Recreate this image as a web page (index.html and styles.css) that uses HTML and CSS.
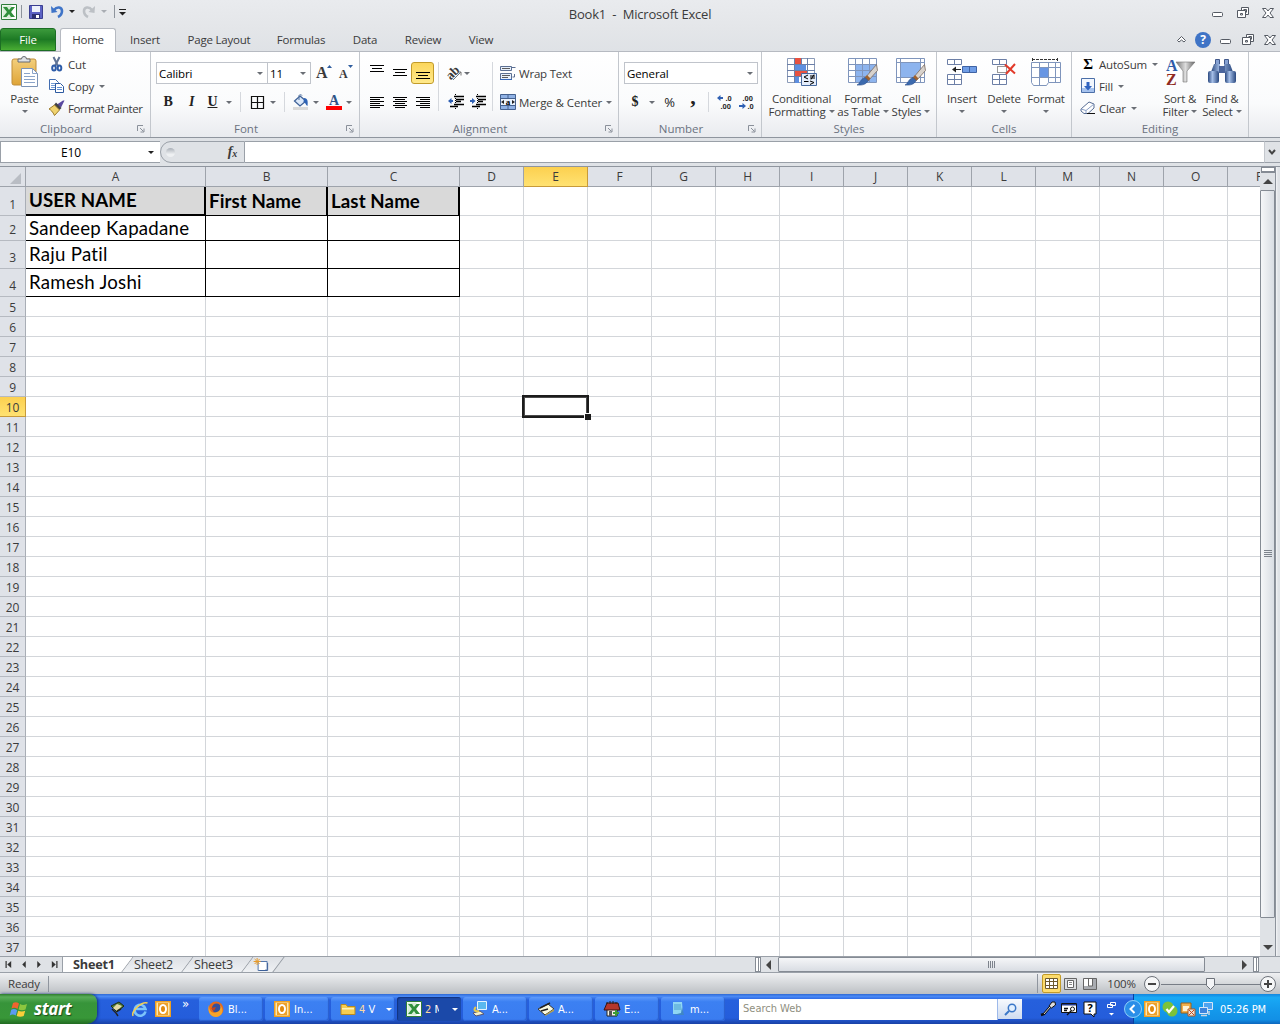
FILE: index.html
```html
<!DOCTYPE html>
<html lang="en">
<head>
<meta charset="UTF-8">
<meta name="viewport" content="width=device-width, initial-scale=1.0">
<title>Book1 - Microsoft Excel</title>
<link rel="stylesheet" href="styles.css">
</head>
<body>
  <svg class="sprite">
    <defs>
      <linearGradient id="darkBlue" x1="0" y1="0" x2="1" y2="0"><stop offset="0" stop-color="#29487f"/><stop offset=".4" stop-color="#a5bfe8"/><stop offset="1" stop-color="#29487f"/></linearGradient>
      <linearGradient id="grey" x1="0" y1="0" x2="1" y2="0"><stop offset="0" stop-color="#777"/><stop offset=".5" stop-color="#ddd"/><stop offset="1" stop-color="#666"/></linearGradient>
      <linearGradient id="board" x1="0" y1="0" x2="0" y2="1"><stop offset="0" stop-color="#f3cf7c"/><stop offset="1" stop-color="#dfa437"/></linearGradient>
    </defs>
    <symbol id="minimize" viewBox="0 0 12 12"><rect x=".5" y="5.5" width="10" height="4" rx="1" fill="#fff" stroke="#555a63"/></symbol>
    <symbol id="restore" viewBox="0 0 12 12"><path d="M4.500.5h7v7h-7z" fill="#fff" stroke="#555a63"/><path d="M.5 3.500h8v7h-8z" fill="#fff" stroke="#555a63"/><path d="M3.500 6.500h2v1.500h-2zM6.500 2.500h3v3" fill="none" stroke="#555a63"/></symbol>
    <symbol id="close" viewBox="0 0 12 12"><path d="M.5 1.500h3.500L6 4l2-2.500h3.500L8 6l3.500 4.500H8L6 8l-2 2.500H.5L4 6z" fill="#fff" stroke="#555a63"/></symbol>
    <symbol id="launcher" viewBox="0 0 8 8"><path d="M.5 6V.5H6M3 3l3.500 3.500M7 3.500V7H3.500" fill="none" stroke="#8a909a"/></symbol>
    <symbol id="brush" viewBox="0 0 22 22"><path d="M20.500 0.500l1 6-9 10-3-3z" fill="#d8d2cc" stroke="#7a6a60" stroke-width=".8"/><path d="M11 11l3.500 3.500-2.500 2.500-3.500-3z" fill="#a0622d"/><path d="M9 13.500l3 3c-1.500 4-6 5-11 4.500 3-1 3-6 8-7.500z" fill="#3b69ad" stroke="#2b4f8b" stroke-width=".6"/></symbol>
    <symbol id="outlook" viewBox="0 0 16 16"><path d="M0 0h16v16H0z" fill="#f0a020"/><path d="M1.500 1.500h13v13h-13z" fill="#fbe6b0"/><path d="M3 2h10v12H3z" fill="#eda02a"/><ellipse cx="8" cy="8" rx="3" ry="4" fill="#e08a10" stroke="#fff" stroke-width="2"/></symbol>
    <symbol id="excel" viewBox="0 0 16 16"><path d="M.5.5h15v15H.5z" fill="#fff" stroke="#2e7d3a"/><path d="M1.500 1.500h9v13h-9z" fill="#d8edd8"/><path d="M2 3h4l2 3 2.500-3H14L10 8l4 5h-4l-2-3-2.500 3H2l4-5z" fill="#30903c"/></symbol>
  </svg>

  <div class="title-bar">
    <div class="quick-access">
      <svg class="qa-excel" viewBox="0 0 16 16"><use href="#excel"/></svg>
      <i class="qa-sep"></i>
      <svg class="qa-save" viewBox="0 0 14 14"><path d="M.5.5h13v13h-13z" fill="#5c62c4" stroke="#3b3f91"/><path d="M3 1h8v6H3z" fill="#eef2fb"/><path d="M3 9h8v5H3z" fill="#2d3173"/><path d="M7 10h3v3H7z" fill="#fff"/></svg>
      <svg class="qa-undo" viewBox="0 0 13 13"><path d="M3 5c3-4 8-3 8 1 0 3-2 5-4 6" fill="none" stroke="#3f74c8" stroke-width="2.600"/><path d="M0 1l.5 7 6-1z" fill="#3f74c8"/></svg>
      <i class="caret black"></i>
      <svg class="qa-redo" viewBox="0 0 13 13"><path d="M10 5C7 1 2 2 2 6c0 3 2 5 4 6" fill="none" stroke="#bcc0c5" stroke-width="2.600"/><path d="M13 1l-.5 7-6-1z" fill="#bcc0c5"/></svg>
      <i class="caret light"></i>
      <i class="qa-sep last"></i>
      <svg class="qa-more" viewBox="0 0 7 7"><path d="M0 .5h7" stroke="#222"/><path d="M0 3h7L3.500 6.500z" fill="#222"/></svg>
    </div>
    <h1>Book1&nbsp; -&nbsp; Microsoft Excel</h1>
    <div class="window-buttons">
      <svg><use href="#minimize"/></svg>
      <svg><use href="#restore"/></svg>
      <svg><use href="#close"/></svg>
    </div>
  </div>

  <div class="tabs">
    <span class="tab file">File</span>
    <span class="tab home">Home</span>
    <span class="tab insert">Insert</span>
    <span class="tab layout">Page Layout</span>
    <span class="tab formulas">Formulas</span>
    <span class="tab data">Data</span>
    <span class="tab review">Review</span>
    <span class="tab view">View</span>
    <div class="tab-buttons">
      <svg class="collapse" viewBox="0 0 9 7"><path d="M.5 4.500l4-4 4 4-1.500 1.500-2.500-2-2.500 2z" fill="#fff" stroke="#555a63"/></svg>
      <span class="help">?</span>
      <svg><use href="#minimize"/></svg>
      <svg><use href="#restore"/></svg>
      <svg><use href="#close"/></svg>
    </div>
  </div>

  <div class="ribbon">
    <div class="group clipboard">
      <div class="group-body">
        <div class="big paste">
          <svg viewBox="0 0 28 32"><rect x="1" y="3" width="24" height="26" rx="2" fill="url(#board)" stroke="#c08e3a"/><path d="M7 6V3h3.500a2.500 2.500 0 0 1 5 0H19v3z" fill="#dfe2e6" stroke="#666b73"/><path d="M10.500 12.500h11l5 5v13h-16z" fill="#fff" stroke="#7c93b5"/><path d="M21.500 12.500v5h5M13 17.500h6M13 20.500h11M13 23.500h11M13 26.500h11" fill="none" stroke="#8ba4c9"/></svg>
          <span>Paste</span><i class="caret"></i>
        </div>
        <div class="small-list">
          <div class="small"><svg viewBox="0 0 16 16"><path d="M4.500 1l4.500 9M10.500 1L6 10" stroke="#5f7396" stroke-width="2"/><ellipse cx="5" cy="12" rx="1.800" ry="2.500" fill="none" stroke="#2e5ca8" stroke-width="2"/><ellipse cx="10.500" cy="12" rx="1.800" ry="2.500" fill="none" stroke="#2e5ca8" stroke-width="2"/></svg><span>Cut</span></div>
          <div class="small"><svg viewBox="0 0 16 16"><path d="M.5 1.500h6l3 3v7h-9z" fill="#fff" stroke="#426db1"/><path d="M2 5.500h5M2 7.500h5M2 9.500h4" stroke="#739cd6"/><path d="M6.500 5.500h5l3 3v6h-8z" fill="#fff" stroke="#2d5aa0"/><path d="M8 9.500h5M8 11.500h5" stroke="#5f8ed2"/></svg><span>Copy</span><i class="caret"></i></div>
          <div class="small"><svg viewBox="0 0 16 16"><path d="M15.500.5l-3.500 7-4-3 6-4z" fill="#5948a0"/><path d="M7 2.500l5.500 5.500-2 2-5.500-5z" fill="#3f4047"/><path d="M5.500 5l5 5-5 5.500C4 12 1.500 9.500 0 9z" fill="#f0d36f" stroke="#9c7b2a"/></svg><span class="painter">Format Painter</span></div>
        </div>
      </div>
      <div class="group-label"><span>Clipboard</span><svg><use href="#launcher"/></svg></div>
    </div>

    <div class="group font">
      <div class="group-body rows">
        <div class="row">
          <div class="combo family"><span>Calibri</span><i class="caret"></i></div>
          <div class="combo size"><span>11</span><i class="caret"></i></div>
          <span class="grow-font">A<svg viewBox="0 0 5 3"><path d="M0 3h5L2.500 0z" fill="#2f5d9e"/></svg></span>
          <span class="grow-font shrink">A<svg viewBox="0 0 5 3"><path d="M0 0h5L2.500 3z" fill="#2f5d9e"/></svg></span>
        </div>
        <div class="row">
          <b class="letter w24">B</b>
          <i class="letter w23">I</i>
          <u class="letter w19">U</u>
          <span class="drop w14"><i class="caret"></i></span>
          <i class="sep font-sep"></i>
          <span class="cell-icon w19"><svg class="s13" viewBox="0 0 13 13"><path d="M.5.5h12v12H.5zM6.500 0v13M0 6.500h13" fill="none" stroke="#111" stroke-width="1.200"/></svg></span>
          <span class="drop w12"><i class="caret"></i></span>
          <i class="sep font-sep2"></i>
          <span class="cell-icon w20"><svg class="s16" viewBox="0 0 16 16"><path d="M7 2l6 5-6 5-5.500-5z" fill="#dce9fa" stroke="#3f6298" stroke-width="1.300"/><path d="M6 6V1.500c0-1 3-1 3 0" fill="none" stroke="#51719f"/><path d="M11 4c4 0 4 4 3.500 8-2-1-2-4-4-4z" fill="#2e63b5"/><path d="M0 13h15v3H0z" fill="#d9d9d9"/></svg></span>
          <span class="drop w10"><i class="caret"></i></span>
          <span class="font-color">A</span>
          <span class="drop w8"><i class="caret"></i></span>
        </div>
      </div>
      <div class="group-label"><span>Font</span><svg><use href="#launcher"/></svg></div>
    </div>

    <div class="group alignment">
      <div class="group-body">
        <div class="rows icons">
          <div class="row">
            <span class="align-btn"><svg class="lines" viewBox="0 0 14 13"><path d="M0 .5h14M2 3.500h10M0 6.500h14" stroke="#000"/></svg></span>
            <span class="align-btn"><svg class="lines" viewBox="0 0 14 13"><path d="M0 4.500h14M2 7.500h10M0 10.500h14" stroke="#000"/></svg></span>
            <span class="align-btn active"><svg class="lines" viewBox="0 0 14 13"><path d="M0 7.500h14M2 10.500h10M0 13.500h14" stroke="#000"/></svg></span>
          </div>
          <div class="row">
            <span class="align-btn"><svg class="lines" viewBox="0 0 14 13"><path d="M0 1.500h14M0 3.500h10M0 5.500h14M0 7.500h10M0 9.500h14M0 11.500h10" stroke="#000"/></svg></span>
            <span class="align-btn"><svg class="lines" viewBox="0 0 14 13"><path d="M0 1.500h14M2 3.500h10M0 5.500h14M2 7.500h10M0 9.500h14M2 11.500h10" stroke="#000"/></svg></span>
            <span class="align-btn"><svg class="lines" viewBox="0 0 14 13"><path d="M0 1.500h14M4 3.500h10M0 5.500h14M4 7.500h10M0 9.500h14M4 11.500h10" stroke="#000"/></svg></span>
          </div>
        </div>
        <i class="sep tall"></i>
        <div class="rows indent">
          <div class="row">
            <span class="orient"><b>ab</b><svg viewBox="0 0 9 9"><path d="M0 9l8-8M4.500 1H8v3.500" fill="none" stroke="#777"/></svg></span>
            <i class="caret"></i>
          </div>
          <div class="row">
            <span class="cell-icon w23"><svg class="s16" viewBox="0 0 16 16"><path d="M6 2.500h10M8 5.500h8M8 7.500h5M6 10.500h10M2 12.500h8" stroke="#000" stroke-width="1.400"/><path d="M7.500 0v16" stroke="#000" stroke-dasharray="1 1"/><path d="M5 7H2" stroke="#2f60b3" stroke-width="2"/><path d="M0 7l3.500-3v6z" fill="#2f60b3"/></svg></span>
            <span class="cell-icon w22"><svg class="s16" viewBox="0 0 16 16"><path d="M6 2.500h10M8 5.500h8M8 7.500h5M6 10.500h10M2 12.500h8" stroke="#000" stroke-width="1.400"/><path d="M7.500 0v16" stroke="#000" stroke-dasharray="1 1"/><path d="M0 7h3" stroke="#2f60b3" stroke-width="2"/><path d="M5.500 7L2 4v6z" fill="#2f60b3"/></svg></span>
          </div>
        </div>
        <i class="sep tall"></i>
        <div class="rows wrap">
          <div class="row">
            <svg class="s16" viewBox="0 0 16 16"><path d="M.5 1.500h11v4H.5zM.5 8.500h11v6H.5z" fill="#e6effb" stroke="#5b6f92"/><path d="M2 3.500h8M2 10.500h8M2 12.500h6" stroke="#5b5b5b"/><path d="M12 2.500h3.500M14.500 9v3h-2" fill="none" stroke="#5b6f92"/><path d="M0 14.500h12" stroke="#3567b8"/></svg>
            <span class="label">Wrap Text</span>
          </div>
          <div class="row">
            <svg class="s16" viewBox="0 0 16 16"><path d="M.5.5h15v15H.5z" fill="#8fb1e4" stroke="#44618f"/><path d="M1 4.500h14M1 11.500h14M8 1v3M8 12v3" stroke="#44618f"/><path d="M1 5h14v6H1z" fill="#eaf2fd"/><path d="M1 8l3-2v4zM15 8l-3-2v4z" fill="#222"/><text x="8" y="11" class="merge-a">a</text></svg>
            <span class="label merge">Merge &amp; Center</span><i class="caret"></i>
          </div>
        </div>
      </div>
      <div class="group-label"><span>Alignment</span><svg><use href="#launcher"/></svg></div>
    </div>

    <div class="group number">
      <div class="group-body rows">
        <div class="row"><div class="combo format"><span>General</span><i class="caret"></i></div></div>
        <div class="row">
          <b class="letter w22">$</b>
          <span class="drop w11"><i class="caret"></i></span>
          <span class="percent">%</span>
          <b class="comma">,</b>
          <i class="sep number-sep"></i>
          <svg class="decimal" viewBox="0 0 16 16"><path d="M6 4H2" stroke="#2f60b3" stroke-width="2"/><path d="M0 4l3.500-3v6z" fill="#2f60b3"/><text x="8.500" y="6.500">.0</text><text x="3.500" y="15">.00</text></svg>
          <svg class="decimal" viewBox="0 0 16 16"><path d="M0 12h4" stroke="#2f60b3" stroke-width="2"/><path d="M7 12L3.500 9v6z" fill="#2f60b3"/><text x="3.500" y="6.500">.00</text><text x="8.500" y="15">.0</text></svg>
        </div>
      </div>
      <div class="group-label"><span>Number</span><svg><use href="#launcher"/></svg></div>
    </div>

    <div class="group styles">
      <div class="group-body">
        <div class="big cond">
          <svg viewBox="0 0 32 32"><path d="M1.500 2.500h27v24h-27z" fill="#fff" stroke="#8b9bb8"/><path d="M8 2h7v6H8z" fill="#e8513f"/><path d="M8 8h12v6H8z" fill="#5e8fe0"/><path d="M8 14h13v6H8z" fill="#e8513f"/><path d="M8 20h5v7H8z" fill="#5e8fe0"/><path d="M1 8.500h28M1 14.500h28M1 20.500h28M8.500 2v25M15.500 2v6M21.500 2v25" fill="none" stroke="#6b7fa8"/><path d="M15.500 17.500h15v12h-15z" fill="#e3ecfa" stroke="#47699e"/><path d="M22 19l-4 2 4 2M18 25.500h4.500M24 20h5M24 22h5M28 18.500l-3 5M24 25l4 1.500-4 2" fill="none" stroke="#000"/></svg>
          <span>Conditional</span><span>Formatting<i class="caret"></i></span>
        </div>
        <div class="big astable">
          <svg viewBox="0 0 32 32"><path d="M1.500 2.500h28v24h-28z" fill="#fff" stroke="#7f95bc"/><path d="M9 8h20v18H9z" fill="#8db4ee"/><path d="M1 8.500h28M1 14.500h28M1 20.500h28M8.500 2v25M15.500 2v25M22.500 2v25" fill="none" stroke="#7f95bc"/><use href="#brush" x="9" y="8" width="22" height="22"/></svg>
          <span>Format</span><span>as Table<i class="caret"></i></span>
        </div>
        <div class="big cellstyle">
          <svg viewBox="0 0 32 32"><path d="M1.500 2.500h28v24h-28z" fill="#fff" stroke="#7f95bc"/><path d="M1 6.500h28M1 21.500h28M5.500 2v25M25.500 2v25" stroke="#7f95bc"/><path d="M6 7h19v14H6z" fill="#8db4ee"/><use href="#brush" x="9" y="8" width="22" height="22"/></svg>
          <span>Cell</span><span>Styles<i class="caret"></i></span>
        </div>
      </div>
      <div class="group-label plain"><span>Styles</span></div>
    </div>

    <div class="group cells">
      <div class="group-body">
        <div class="big">
          <svg viewBox="0 0 32 32"><path d="M1.500 3.500h14v5h-14zM8.500 3.500v5M1.500 18.500h14v10h-14zM8.500 18.500v10M1.500 23.500h14" fill="#fff" stroke="#6c7fa6"/><path d="M16.500 10.500h14v6h-14z" fill="#6f9de6" stroke="#3f63a4"/><path d="M23.500 10v7" stroke="#3f63a4"/><path d="M8 13.500h7" stroke="#222"/><path d="M6 13.500l4-3v6z" fill="#222"/></svg>
          <span>Insert</span><i class="caret"></i>
        </div>
        <div class="big">
          <svg viewBox="0 0 32 32"><path d="M4.500 3.500h14v5h-14zM11.500 3.500v5M4.500 18.500h14v10h-14zM11.500 18.500v10M4.500 23.500h14" fill="#fff" stroke="#6c7fa6"/><path d="M9.500 10.500h9v6h-9z" fill="#fff" stroke="#333" stroke-dasharray="1 1"/><path d="M17 8.500l10 9M27 8l-9 10" stroke="#e23b2b" stroke-width="2"/></svg>
          <span>Delete</span><i class="caret"></i>
        </div>
        <div class="big">
          <svg viewBox="0 0 32 32"><path d="M2 3.500h26M2.500 2v3M27.500 2v3" stroke="#333" stroke-dasharray="3 1"/><path d="M1.500 6.500h29v20h-12l-2 3h-13l-2-3z" fill="#fff" stroke="#7f95bc"/><path d="M1 11.500h29M1 21.500h29M9.500 6v23M18.500 6v20M25.500 6v20" stroke="#7f95bc"/><path d="M10 12h8v9h-8z" fill="#6896e4"/></svg>
          <span>Format</span><i class="caret"></i>
        </div>
      </div>
      <div class="group-label plain"><span>Cells</span></div>
    </div>

    <div class="group editing">
      <div class="group-body">
        <div class="small-list">
          <div class="small"><b class="sigma">Σ</b><span>AutoSum</span><i class="caret"></i></div>
          <div class="small"><svg viewBox="0 0 16 16"><path d="M1.500.5h13v14h-13z" fill="#f2f7fe" stroke="#4b6fa8"/><path d="M2 10h12v4H2z" fill="#a7c3ee"/><path d="M6.500 4h3v4H12l-4 4.500L4 8h2.500z" fill="#2f63c0"/></svg><span>Fill</span><i class="caret"></i></div>
          <div class="small"><svg viewBox="0 0 16 16"><path d="M9 2l5 2v4l-6 5.500H4L1 11v-2z" fill="#fff" stroke="#576d94"/><path d="M1 9l5 1.500L14 4M6 10.500V13" fill="none" stroke="#8ba0c6"/><path d="M7 13.500h8" stroke="#111"/></svg><span>Clear</span><i class="caret"></i></div>
        </div>
        <div class="big">
          <svg viewBox="0 0 32 32"><path d="M12 6h19l-8 9v11h-4V15z" fill="url(#grey)" stroke="#777" stroke-width=".6"/><text x="2" y="15" class="az-a">A</text><text x="2" y="29" class="az-z">Z</text></svg>
          <span>Sort &amp;</span><span>Filter<i class="caret"></i></span>
        </div>
        <div class="big find">
          <svg viewBox="0 0 32 32"><path d="M9.500 3.500h4v5h-4zM18.500 3.500h4v5h-4z" fill="#86a2d3" stroke="#40588a"/><path d="M8 8h6v8H5zM18 8h6l3 8h-9z" fill="url(#darkBlue)"/><path d="M13 10h6v7h-6z" fill="#4a659c"/><rect x="2" y="15" width="11" height="12" rx="2" fill="url(#darkBlue)"/><rect x="19" y="15" width="11" height="12" rx="2" fill="url(#darkBlue)"/></svg>
          <span>Find &amp;</span><span>Select<i class="caret"></i></span>
        </div>
      </div>
      <div class="group-label plain"><span>Editing</span></div>
    </div>
  </div>

  <div class="formula-bar">
    <div class="name-box"><span>E10</span><i class="caret black"></i></div>
    <div class="fx-area"><i class="knob"></i><span class="fx">f<sub>x</sub></span></div>
    <div class="formula-input"></div>
    <div class="expand"><svg viewBox="0 0 8 7"><path d="M1 1l3 3.500L7 1" fill="none" stroke="#444" stroke-width="2"/></svg></div>
  </div>

  <div class="workspace">
    <div class="sheet">
      <table>
        <colgroup id="cols"></colgroup>
        <thead><tr id="colHeads"></tr></thead>
        <tbody id="rows"></tbody>
      </table>
    </div>
    <div class="v-scroll">
      <i class="split"></i>
      <i class="arrow up"></i>
      <div class="thumb"><i class="grip"></i></div>
      <i class="arrow down"></i>
    </div>
  </div>

  <div class="sheet-bar">
    <div class="sheet-nav">
      <svg viewBox="0 0 8 8"><path d="M.7 0v8" stroke="#333" stroke-width="1.400"/><path d="M6.500 0v8L2 4z" fill="#333"/></svg>
      <svg viewBox="0 0 8 8"><path d="M6 0v8L2 4z" fill="#333"/></svg>
      <svg viewBox="0 0 8 8"><path d="M2 0v8l4-4z" fill="#333"/></svg>
      <svg viewBox="0 0 8 8"><path d="M7.300 0v8" stroke="#333" stroke-width="1.400"/><path d="M1.500 0v8L6 4z" fill="#333"/></svg>
    </div>
    <div class="sheet-tab current"><span>Sheet1</span></div>
    <div class="sheet-tab"><span>Sheet2</span></div>
    <div class="sheet-tab"><span>Sheet3</span></div>
    <div class="sheet-tab new"><svg viewBox="0 0 16 14"><path d="M4.500 3.500h9v7l-2 2h-7z" fill="#fff" stroke="#5476ab"/><path d="M6 12.500h8V5" fill="none" stroke="#3c5f98"/><path d="M3.500 0v7M0 3.500h7M1 1l5 5M6 1L1 6" stroke="#e69a2b"/></svg></div>
    <div class="h-scroll">
      <i class="split"></i>
      <i class="arrow left"></i>
      <div class="thumb"><i class="grip"></i></div>
      <i class="arrow right"></i>
      <i class="split end"></i>
    </div>
  </div>

  <div class="status-bar">
    <span class="ready">Ready</span>
    <div class="status-right">
      <span class="view-btn active"><svg viewBox="0 0 13 11"><path d="M.5.5h12v10H.5zM0 3.500h13M0 7.500h13M4.500 0v11M8.500 0v11" fill="#fff" stroke="#6d5a2e"/></svg></span>
      <svg class="view-icon" viewBox="0 0 14 12"><path d="M.5.5h12v11H.5z" fill="#dcdee1" stroke="#666"/><path d="M3.500 2.500h6v7h-6z" fill="#fff" stroke="#666"/><path d="M5 4.500h3M5 6.500h3" stroke="#888"/></svg>
      <svg class="view-icon" viewBox="0 0 14 12"><path d="M.5.5h13v11H.5z" fill="#a9acb1" stroke="#666"/><path d="M1 1h4v7H1zM6 1h3v7H6z" fill="#fff"/><path d="M5.500 1v7h4V1" fill="none" stroke="#666"/></svg>
      <span class="zoom">100%</span>
      <svg class="slider" viewBox="0 0 136 18"><path d="M17 9.500h101" stroke="#777d86"/><circle cx="8" cy="9" r="7.500" fill="#f6f7f8" stroke="#6c7179"/><path d="M4 9h8" stroke="#444" stroke-width="2"/><path d="M62.500 3.500h8v7l-4 4-4-4z" fill="#f4f5f7" stroke="#6c7179"/><circle cx="124" cy="9" r="7.500" fill="#f6f7f8" stroke="#6c7179"/><path d="M120 9h8M124 5v8" stroke="#444" stroke-width="2"/></svg>
    </div>
  </div>

  <div class="taskbar">
    <div class="start">
      <svg viewBox="0 0 18 17"><path d="M3 2c2-1 4-1 6 .5L7.500 8C5.500 6.500 3.500 6.500 1.500 7.500z" fill="#f0642f"/><path d="M10 3c2 1.200 4 1.200 7 0l-1.500 5.500c-2 1-5 1-7 0z" fill="#8cc63f"/><path d="M1.200 8.700c2-1 4-.8 6 .5L5.700 14.500c-2-1.200-4-1.200-6 0z" fill="#5b9bf0"/><path d="M8.200 9.700c2 1 5 1 7 0L13.700 15c-2 1-5 1-7 0z" fill="#fbce3a"/></svg>
      <span>start</span>
    </div>
    <div class="quick-launch">
      <svg viewBox="0 0 16 16"><path d="M2 5l8-4 5 4-7 6z" fill="#4f7b3b" stroke="#1e2b14"/><path d="M4 7l4-4 5 2-5 5z" fill="#e3d9a6"/><path d="M3 8l4 4 2 3M8 10l4-2" fill="none" stroke="#222" stroke-width="1.400"/></svg>
      <svg viewBox="0 0 16 16"><path d="M13.500 10.500A5.500 5.500 0 1 1 13.500 8H4" fill="none" stroke="#7cc4fb" stroke-width="2.600"/><path d="M1 15C-1 10 10 0 15.500 2" fill="none" stroke="#f3cf55" stroke-width="1.500"/></svg>
      <svg viewBox="0 0 16 16"><use href="#outlook"/></svg>
      <span>»</span>
    </div>
    <div class="tasks">
      <div class="task"><svg viewBox="0 0 16 16"><circle cx="8" cy="8" r="7.500" fill="#e66a1c"/><circle cx="8.500" cy="7" r="4.500" fill="#34509e"/><path d="M1 4c0 7 4 9 8 7 3-1 4-4 3-7 5 5 2 12-4 12C2 16-1 10 1 4z" fill="#f6a42a"/><path d="M3 7l5-1-2 4z" fill="#c8431b"/></svg><span>Bl...</span></div>
      <div class="task"><svg viewBox="0 0 16 16"><use href="#outlook"/></svg><span>In...</span></div>
      <div class="task multi"><svg viewBox="0 0 16 16"><path d="M1 3.500h5l1.500 2H15v8H1z" fill="#f6ce52" stroke="#b98a1f"/><path d="M2 7h12v1.500H2z" fill="#fff3b8"/></svg><span><em>4</em> V</span><i class="caret white"></i></div>
      <div class="task multi pressed"><svg viewBox="0 0 16 16"><use href="#excel"/></svg><span><em>2</em> <s>M</s></span><i class="caret white"></i></div>
      <div class="task"><svg viewBox="0 0 16 16"><path d="M5.500.5h9v8h-9z" fill="#5bb8ef" stroke="#e4f2ff"/><path d="M1 12l7-2 4 3-8 2z" fill="#f4f0ca" stroke="#557"/><path d="M4 6c-3 3-1 5 3 4" fill="none" stroke="#e7c84c" stroke-width="2"/></svg><span>A...</span></div>
      <div class="task"><svg viewBox="0 0 16 16"><path d="M0 8l10-5 6 5-9 6z" fill="#fbfae0" stroke="#333"/><path d="M2 7L12 2M3 10l7-2" stroke="#222" stroke-width="1.400"/><path d="M7 14l9-6v2l-9 5z" fill="#b7a24e"/></svg><span>A...</span></div>
      <div class="task"><svg viewBox="0 0 16 16"><path d="M3 7h10v8H3z" fill="#f3f3ea" stroke="#222"/><path d="M0 9l3-7h11l2 7z" fill="#b5372c" stroke="#3b1210"/><path d="M3 1v2M6 0v3M9 0v3M12 1v2" stroke="#222"/><path d="M5 10h3v5H5z" fill="#555"/><path d="M9 12h6M12 9v6" stroke="#3d9b36" stroke-width="2"/></svg><span>E...</span></div>
      <div class="task"><svg viewBox="0 0 16 16"><path d="M3 1h9l1 12H3z" fill="#8fd6f3"/><path d="M4 4h7M4 6h7M4 8h7" stroke="#4aa0cf"/><path d="M12 6l2 8H3l8-2z" fill="#3f86c4"/></svg><span>m...</span></div>
    </div>
    <div class="search"><span>Search Web</span></div>
    <div class="search-btn"><svg viewBox="0 0 13 13"><circle cx="8" cy="5" r="3.700" fill="#e2f0ff" stroke="#3a77c8" stroke-width="1.500"/><path d="M5 8l-4 4" stroke="#3a77c8" stroke-width="2"/></svg></div>
    <div class="lang-bar">
      <svg class="mic" viewBox="0 0 16 16"><path d="M9 5l3-4h3l.5 3-4 3z" fill="#ddd" stroke="#111"/><path d="M10 6l-6 7-3 1" fill="none" stroke="#111" stroke-width="2.500"/><path d="M10 6l-6 7" stroke="#ddd"/></svg>
      <svg class="pad" viewBox="0 0 16 16"><path d="M.5 2.500h15v9H.5z" fill="#fff" stroke="#111"/><path d="M1 3h14v1.500H1z" fill="#223a8c"/><path d="M3 7.500h4M3 9.500h3M6 14l6-6" stroke="#111" stroke-width="1.400"/><circle cx="11.500" cy="8" r="2" fill="#fff" stroke="#111"/></svg>
      <svg class="hlp" viewBox="0 0 14 16"><path d="M1 1h12v12h-2v3l-3-3H1z" fill="#fff" stroke="#111"/><text x="7" y="11">?</text></svg>
      <svg class="opt" viewBox="0 0 9 16"><path d="M3.500 1.500h5v3h-5zM.5 3.500h5v3h-5z" fill="#2456c9" stroke="#fff"/><path d="M2 12h5l-2.500 2.500z" fill="#fff"/></svg>
    </div>
    <div class="tray">
      <svg class="chevron" viewBox="0 0 18 18"><circle cx="9" cy="9" r="8.500" fill="#2a8ee8" stroke="#8fd0fa"/><path d="M10.500 5L6.500 9l4 4" fill="none" stroke="#fff" stroke-width="2"/></svg>
      <svg viewBox="0 0 16 16"><use href="#outlook"/></svg>
      <svg viewBox="0 0 16 16"><circle cx="6" cy="6" r="5.500" fill="#7cc23a"/><circle cx="10" cy="10" r="5.500" fill="#7cc23a"/><path d="M4.500 8l2.500 3 5-6" fill="none" stroke="#fff" stroke-width="2.200"/></svg>
      <svg viewBox="0 0 16 16"><path d="M1 2h10v10H1z" fill="#f0b04c" stroke="#9c6117"/><path d="M3 5h6v5H3z" fill="#fff3d4"/><path d="M8 8h7v7H8z" fill="#e7e3d8" stroke="#b4561e"/><path d="M9 9l5 5M14 9l-5 5" stroke="#c9481c"/></svg>
      <svg viewBox="0 0 16 16"><path d="M5.500 1.500h9v7h-9z" fill="#4fa3f0" stroke="#d6e6f7"/><path d="M1.500 6.500h8v6h-8z" fill="#3c84dc" stroke="#d6e6f7"/><path d="M3 14.500h6M11 10v4" stroke="#c9d5e2" stroke-width="1.500"/></svg>
      <span class="clock">05:26 PM</span>
    </div>
  </div>
  <script src="script.js"></script>
</body>
</html>
```
FILE: styles.css
```css
* {
  box-sizing: border-box;
}
body {
  margin: 0;
  width: 1280px;
  height: 1024px;
  overflow: hidden;
  display: flex;
  flex-direction: column;
  background-color: #dfe2e6;
  font-family: "Open Sans", "Noto Sans", sans-serif;
  font-size: 11.5px;
  letter-spacing: -0.2px;
  color: #3b3b3b;
  cursor: default;
}
svg {
  display: block;
  flex: none;
  overflow: visible;
}
.sprite {
  position: absolute;
  width: 0;
  height: 0;
}
.caret {
  flex: none;
  width: 0;
  height: 0;
  border: 3px solid transparent;
  border-top-color: #6a6e75;
  border-bottom: none;
}
.caret.black {
  border-top-color: #222222;
}
.caret.light {
  border-top-color: #a9adb3;
}
.caret.white {
  border-top-color: #ffffff;
}

/* title bar */
.title-bar {
  height: 28px;
  display: grid;
  grid-template-columns: 1fr auto 1fr;
  background: linear-gradient(#e9ebee, #e4e6e9);
}
.title-bar h1 {
  margin: 0;
  font-size: 13px;
  font-weight: normal;
  line-height: 29px;
  letter-spacing: -0.2px;
}
.quick-access {
  display: flex;
  align-items: center;
  height: 23px;
  padding-left: 1px;
}
.qa-excel {
  width: 16px;
  height: 16px;
}
.qa-sep {
  width: 1px;
  height: 13px;
  margin: 0 7px 0 4px;
  background-color: #8e949c;
}
.qa-save {
  width: 14px;
  height: 14px;
}
.qa-undo {
  width: 13px;
  height: 13px;
  margin: 0 5px 0 8px;
}
.qa-redo {
  width: 13px;
  height: 13px;
  margin: 0 6px 0 7px;
}
.qa-sep.last {
  margin: 0 4px 0 7px;
}
.qa-more {
  width: 7px;
  height: 7px;
  margin-top: 2px;
}
.window-buttons {
  display: flex;
  justify-content: flex-end;
  gap: 13px;
  padding: 7px 6px 0 0;
}
.window-buttons svg,
.tab-buttons svg {
  width: 12px;
  height: 12px;
}

/* ribbon tabs */
.tabs {
  height: 24px;
  display: flex;
  background: linear-gradient(#e4e6e9, #dfe2e6);
  border-bottom: 1px solid #b6bac1;
}
.tab {
  height: 24px;
  line-height: 24px;
  text-align: center;
}
.tab.file {
  width: 56px;
  height: 23px;
  margin-right: 4px;
  color: #ffffff;
  border: 1px solid #1c6e24;
  border-radius: 3px 3px 0 0;
  line-height: 22px;
  background: linear-gradient(#3c9a3c, #1d7a24 50%, #49ad33);
}
.tab.home {
  width: 56px;
  background-color: #ffffff;
  border: 1px solid #b6bac1;
  border-bottom: none;
  border-radius: 3px 3px 0 0;
  line-height: 22px;
}
.tab.insert {
  width: 58px;
}
.tab.layout {
  width: 90px;
}
.tab.formulas {
  width: 74px;
}
.tab.data {
  width: 54px;
}
.tab.review {
  width: 62px;
}
.tab.view {
  width: 54px;
}
.tab-buttons {
  display: flex;
  align-items: center;
  gap: 10px;
  margin-left: auto;
  padding-right: 4px;
}
.tab-buttons .collapse {
  width: 9px;
  height: 7px;
  margin-right: -1px;
}
.help {
  width: 16px;
  height: 16px;
  margin-right: -1px;
  border-radius: 50%;
  background-color: #3f74c6;
  color: #ffffff;
  font-weight: bold;
  font-size: 12px;
  line-height: 16px;
  text-align: center;
}

/* ribbon */
.ribbon {
  height: 86px;
  display: flex;
  background: linear-gradient(#ffffff, #fafbfc 60%, #e9ebef);
  border-bottom: 1px solid #8f959e;
}
.group {
  display: flex;
  flex-direction: column;
  border-right: 1px solid #c3c7cd;
}
.clipboard {
  width: 151px;
}
.font {
  width: 209px;
}
.alignment {
  width: 259px;
}
.number {
  width: 143px;
}
.styles {
  width: 175px;
}
.cells {
  width: 135px;
}
.editing {
  width: 177px;
}
.group-body {
  height: 68px;
  display: flex;
}
.group-label {
  height: 17px;
  display: flex;
  align-items: center;
  color: #6b7280;
  padding-right: 5px;
  letter-spacing: 0;
}
.group-label span {
  flex: 1;
  text-align: center;
  padding-right: 5px;
  line-height: 17px;
}
.group-label svg {
  width: 8px;
  height: 8px;
}
.group-label.plain {
  padding-right: 0;
}
.group-label.plain span {
  padding-right: 0;
}
.rows {
  display: flex;
  flex-direction: column;
  padding-top: 10px;
  gap: 7px;
}
.row {
  height: 22px;
  display: flex;
  align-items: center;
}
.big {
  display: flex;
  flex-direction: column;
  align-items: center;
  width: 42px;
  padding-top: 4px;
  white-space: nowrap;
}
.big svg {
  width: 32px;
  height: 32px;
  margin-bottom: 4px;
}
.big span {
  display: flex;
  align-items: center;
  gap: 3px;
  height: 13px;
  line-height: 13px;
}
.big > .caret {
  margin-top: 5px;
}
.big.paste {
  width: 49px;
}
.big.paste svg {
  width: 28px;
}
.small {
  height: 22px;
  display: flex;
  align-items: center;
  white-space: nowrap;
}
.small-list {
  padding-top: 1px;
}
.small svg {
  width: 16px;
  height: 16px;
  margin-right: 3px;
}
.small .caret {
  margin-left: 5px;
}
.painter {
  letter-spacing: -0.4px;
}
.sep {
  flex: none;
  width: 1px;
  height: 20px;
  background-color: #d5d8dd;
}
.sep.tall {
  height: 49px;
  margin-top: 10px;
}
.font .group-body,
.number .group-body {
  padding-left: 5px;
}
.combo {
  height: 22px;
  display: flex;
  align-items: center;
  justify-content: space-between;
  padding: 0 4px 0 2px;
  border: 1px solid #c0c4cb;
  background-color: #ffffff;
  color: #000000;
  letter-spacing: -0.1px;
}
.combo.family {
  width: 112px;
}
.combo.size {
  width: 44px;
  margin: 0 3px 0 -1px;
}
.combo.format {
  width: 134px;
}
.grow-font {
  display: flex;
  width: 22px;
  padding-left: 2px;
  font: bold 16px "Liberation Serif", serif;
}
.grow-font.shrink {
  font-size: 12px;
  padding-left: 3px;
  padding-top: 3px;
}
.grow-font svg {
  width: 5px;
  height: 3px;
  margin-top: 1px;
}
.shrink svg {
  margin: -2px 0 0 1px;
}
.letter {
  font: bold 14px "Liberation Serif", serif;
  color: #222222;
  text-align: center;
}
i.letter {
  font-style: italic;
}
.drop,
.cell-icon {
  display: flex;
  justify-content: center;
}
.w8 { width: 8px; }
.w10 { width: 10px; }
.w11 { width: 11px; }
.w12 { width: 12px; }
.w14 { width: 14px; }
.w19 { width: 19px; }
.w20 { width: 20px; }
.w22 { width: 22px; }
.w23 { width: 23px; }
.w24 { width: 24px; }
.s13 {
  width: 13px;
  height: 13px;
}
.s16 {
  width: 16px;
  height: 16px;
}
.font-sep {
  margin: 0 7px 0 4px;
}
.font-sep2 {
  margin: 0 6px 0 5px;
}
.font-color {
  width: 16px;
  height: 16px;
  margin: 0 3px 0 5px;
  border-bottom: 4px solid #ff0000;
  font: bold 14px/13px "Liberation Serif", serif;
  color: #2f5487;
  text-align: center;
}
.icons {
  padding-left: 5px;
}
.align-btn {
  width: 23px;
  height: 22px;
  display: flex;
  align-items: center;
  justify-content: center;
}
.icons .row:first-child svg {
  margin-top: -3px;
}
.align-btn.active {
  border: 1px solid #c29b29;
  border-radius: 3px;
  background: linear-gradient(#fbd65c, #ffe98b);
}
.lines {
  width: 14px;
  height: 13px;
}
.icons + .sep {
  margin-left: 4px;
}
.indent {
  width: 53px;
  padding-left: 5px;
}
.orient {
  width: 20px;
  display: flex;
  align-items: center;
  padding-left: 2px;
}
.orient b {
  font: bold 13px "Liberation Serif", serif;
  transform: rotate(-45deg);
}
.orient svg {
  width: 9px;
  height: 9px;
  margin-left: -6px;
  margin-top: 5px;
}
.wrap {
  padding-left: 7px;
}
.wrap .label {
  margin-left: 3px;
}
.wrap .merge {
  letter-spacing: -0.1px;
}
.wrap .caret {
  margin-left: 4px;
}
.merge-a {
  font: bold 9px "Liberation Serif", serif;
  text-anchor: middle;
}
.percent {
  width: 25px;
  text-align: center;
  font-size: 13px;
  color: #222222;
}
.comma {
  width: 22px;
  text-align: center;
  font: bold 22px/6px "Liberation Serif", serif;
  height: 16px;
  color: #222222;
}
.number-sep {
  margin: 0 8px 0 4px;
}
.decimal {
  width: 16px;
  height: 16px;
  margin-right: 6px;
}
.decimal text {
  font: bold 7.5px "Liberation Sans", sans-serif;
  letter-spacing: 0;
  fill: #222222;
}
.big.cond {
  width: 67px;
}
.styles .group-body {
  padding-left: 6px;
}
.big.astable {
  width: 56px;
}
.big.cellstyle {
  width: 40px;
}
.cells .group-body {
  padding-left: 4px;
}
.editing .small-list {
  width: 87px;
  padding-left: 8px;
}
.sigma {
  width: 16px;
  margin-right: 3px;
  text-align: center;
  font: bold 15px "Liberation Serif", serif;
  color: #000000;
}
.az-a,
.az-z {
  font: bold 16px "Liberation Serif", serif;
  fill: #2e5ba8;
}
.az-z {
  fill: #8f2a22;
}

/* formula bar */
.formula-bar {
  height: 29px;
  display: flex;
  padding: 3px 0 3px;
  background-color: #dfe2e6;
  border-bottom: 1px solid #8f959e;
}
.name-box,
.fx-area,
.formula-input,
.expand {
  height: 22px;
  border-top: 1px solid #9aa0a8;
  border-bottom: 1px solid #9aa0a8;
}
.name-box {
  width: 160px;
  display: flex;
  align-items: center;
  padding-right: 6px;
  background-color: #ffffff;
  border-left: 1px solid #9aa0a8;
  color: #000000;
}
.name-box span {
  flex: 1;
  text-align: center;
  padding-right: 7px;
  font-size: 12px;
}
.fx-area {
  width: 85px;
  display: flex;
  align-items: center;
  justify-content: space-between;
  padding: 0 7px 0 5px;
  border-left: 1px solid #9aa0a8;
  border-right: 1px solid #9aa0a8;
  border-radius: 11px 0 0 11px;
}
.knob {
  width: 9px;
  height: 9px;
  border-radius: 50%;
  background: linear-gradient(#aab0b8, #eef0f2 70%);
}
.fx {
  font: italic bold 14px "Liberation Serif", serif;
}
.fx sub {
  font-size: 10px;
  vertical-align: -1px;
}
.formula-input {
  flex: 1;
  background-color: #ffffff;
}
.expand {
  width: 16px;
  padding: 7px 0 0 3px;
  border-left: 1px solid #c3c7cd;
}
.expand svg {
  width: 8px;
  height: 7px;
}

/* worksheet */
.workspace {
  height: 789px;
  display: flex;
}
.sheet {
  width: 1260px;
  overflow: hidden;
  background-color: #ffffff;
}
table {
  width: 1291px;
  table-layout: fixed;
  border-spacing: 0;
}
th,
td {
  height: 20px;
  padding: 0;
  border-right: 1px solid #d3d6da;
  border-bottom: 1px solid #d3d6da;
  white-space: nowrap;
}
th {
  font-weight: normal;
  font-size: 12px;
  line-height: 17px;
  background-color: #dfe2e8;
  border-color: #a9aeb6;
}
thead th {
  border-color: #9ea3ab;
}
tbody th {
  border-bottom-color: #b6bac1;
  vertical-align: bottom;
}
tbody th.tall {
  padding-bottom: 2px;
}
.corner {
  padding: 5px 4px 2px 10px;
}
.corner svg {
  width: 11px;
  height: 11px;
}
.picked {
  background: linear-gradient(#fcd04f, #ffe272);
  border-color: #c79a3a;
}
td {
  padding-left: 3px;
  font-family: Lato, sans-serif;
  font-size: 18.67px;
  line-height: 19px;
  letter-spacing: 0.25px;
  color: #000000;
}
td.filled {
  border-color: #000000;
}
td.heading {
  background-color: #d9d9d9;
  font-weight: bold;
  letter-spacing: 0.1px;
  border-right-width: 2px;
}
td.heading:nth-child(2) {
  border-bottom-width: 2px;
}
.cursor {
  position: relative;
}
.cursor::before {
  content: "";
  position: absolute;
  inset: -2px -2px -2px -2px;
  border: 2px solid #1c1c1c;
  outline: 1px solid #4a4a4a;
  outline-offset: -3px;
}
.cursor::after {
  content: "";
  position: absolute;
  right: -4px;
  bottom: -4px;
  width: 6px;
  height: 6px;
  background-color: #1c1c1c;
  border: solid #ffffff;
  border-width: 1px 0 0 1px;
}
.v-scroll {
  width: 20px;
  display: flex;
  flex-direction: column;
  align-items: center;
  padding-right: 5px;
  background: linear-gradient(to right, #dfe2e6 15px, #8d939c 15px, #8d939c 16px, #f4f5f7 16px, #dfe2e6 18px);
}
.split {
  flex: none;
  background-color: #ffffff;
  border: 1px solid #858b94;
}
.v-scroll .split {
  width: 14px;
  height: 6px;
  border-bottom-width: 2px;
}
.arrow {
  flex: none;
  width: 0;
  height: 0;
  border: 5px solid transparent;
}
.arrow.up {
  border-top: none;
  border-bottom-color: #444444;
  margin: 6px 0;
}
.arrow.down {
  border-bottom: none;
  border-top-color: #444444;
  margin: 27px 0 0;
}
.thumb {
  display: flex;
  align-items: center;
  justify-content: center;
  border: 1px solid #858b94;
  border-radius: 1px;
}
.v-scroll .thumb {
  width: 15px;
  height: 728px;
  background: linear-gradient(to right, #f5f6f8, #d9dde3);
}
.v-scroll .grip {
  width: 8px;
  height: 8px;
  background: repeating-linear-gradient(#7d838c 0 1px, transparent 1px 2px);
}

/* sheet tabs */
.sheet-bar {
  height: 17px;
  display: flex;
  border-top: 1px solid #9aa0a8;
  border-bottom: 1px solid #9aa0a8;
}
.sheet-nav {
  z-index: 1;
  width: 63px;
  display: flex;
  align-items: center;
  gap: 7px;
  padding-left: 5px;
  background-color: #dfe2e6;
  border-right: 1px solid #9aa0a8;
}
.sheet-nav svg {
  width: 8px;
  height: 7px;
}
.sheet-tab {
  width: 60px;
  display: flex;
  align-items: center;
  justify-content: center;
  padding-right: 9px;
  border-right: 1px solid #8f959e;
  background: linear-gradient(#dde0e5, #eff1f4);
  transform: skewX(-37deg);
}
.sheet-tab span,
.sheet-tab svg {
  transform: skewX(37deg);
  font-size: 12.5px;
  line-height: 15px;
}
.sheet-tab.current {
  width: 74px;
  margin-left: -9px;
  padding: 0 0 0 7px;
  background: #ffffff;
  font-weight: bold;
}
.sheet-tab.current span {
  font-size: 12.700px;
}
.sheet-tab.new {
  width: 31px;
  padding-right: 2px;
}
.sheet-tab.new svg {
  width: 16px;
  height: 14px;
}
.h-scroll {
  display: flex;
  align-items: center;
  margin-left: auto;
  padding-right: 21px;
}
.h-scroll .split {
  width: 6px;
  height: 15px;
  background: linear-gradient(to right, #ffffff 2px, #858b94 2px, #858b94 3px, #ffffff 3px);
}
.arrow.left {
  border-left: none;
  border-right-color: #444444;
  margin: 0 7px 0 5px;
}
.arrow.right {
  border-right: none;
  border-left-color: #444444;
  margin: 0 6px 0 37px;
}
.h-scroll .thumb {
  width: 427px;
  height: 15px;
  background: linear-gradient(#f5f6f8, #d9dde3);
}
.h-scroll .grip {
  width: 8px;
  height: 7px;
  background: repeating-linear-gradient(to right, #7d838c 0 1px, transparent 1px 2px);
}

/* status bar */
.status-bar {
  height: 21px;
  display: flex;
  align-items: center;
  justify-content: space-between;
  background: linear-gradient(#eff0f2, #bcc0c4);
}
.ready {
  width: 49px;
  padding-left: 8px;
  line-height: 16px;
  border-right: 1px solid #8f959e;
}
.status-right {
  display: flex;
  align-items: center;
  padding-left: 4px;
  border-left: 1px solid #8f959e;
}
.view-btn {
  width: 19px;
  height: 19px;
  display: flex;
  align-items: center;
  justify-content: center;
}
.view-btn.active {
  border: 1px solid #c29b29;
  border-radius: 2px;
  background-color: #fddc6c;
}
.view-btn svg {
  width: 13px;
  height: 11px;
}
.view-icon {
  width: 14px;
  height: 12px;
  margin-left: 3px;
}
.view-icon + .view-icon {
  margin-left: 5px;
}
.zoom {
  width: 47px;
  padding-left: 2px;
  text-align: center;
}
.slider {
  width: 136px;
  height: 18px;
}

/* taskbar */
.taskbar {
  height: 30px;
  display: flex;
  align-items: center;
  background: linear-gradient(#2f6ad4, #4a8af5 8%, #2660dd 20%, #245ddb 80%, #1941a5);
  font-family: "DejaVu Sans Condensed", "DejaVu Sans", sans-serif;
  font-size: 11px;
  letter-spacing: 0;
  color: #ffffff;
}
.start {
  width: 97px;
  height: 30px;
  display: flex;
  align-items: center;
  gap: 6px;
  padding-left: 10px;
  border-radius: 0 8px 10px 0;
  background: linear-gradient(#2e7d2e, #58ad58 10%, #37943a 30%, #389738 80%, #216a21);
  box-shadow: 1px 0 3px #12307a;
}
.start svg {
  width: 18px;
  height: 17px;
}
.start span {
  font: italic bold 17px/26px "Open Sans", sans-serif;
  text-shadow: 1px 1px 1px #1b4d1b;
  letter-spacing: -0.4px;
}
.quick-launch {
  width: 101px;
  display: flex;
  gap: 7px;
  padding-left: 12px;
}
.quick-launch svg {
  width: 16px;
  height: 16px;
}
.quick-launch span {
  font-size: 13px;
  line-height: 8px;
  margin: -1px 0 0 4px;
}
.tasks {
  display: flex;
  gap: 2px;
  width: 541px;
  padding-left: 1px;
}
.task {
  width: 64px;
  height: 24px;
  display: flex;
  align-items: center;
  gap: 4px;
  padding-left: 9px;
  border-radius: 3px;
  background: linear-gradient(#5f9bfb, #3c80f2 20%, #3a7cf0);
  box-shadow: inset -1px -1px 1px #2a5fce;
}
.task svg {
  width: 16px;
  height: 16px;
}
.task em {
  font-style: normal;
  color: #fbd9a0;
}
.task s {
  display: inline-block;
  width: 5px;
  overflow: hidden;
  vertical-align: bottom;
  text-decoration: none;
}
.task.multi .caret {
  margin: 0 3px 0 auto;
}
.task.multi span {
  white-space: nowrap;
}
.task.multi {
  gap: 3px;
}
.task.pressed {
  background: #1b49a9;
  box-shadow: inset 1px 1px 1px #12347f;
}
.search {
  width: 259px;
  height: 21px;
  padding-left: 4px;
  background-color: #ffffff;
  border-right: 1px solid #9db9ea;
  color: #8f8f80;
  line-height: 19px;
}
.search-btn {
  width: 24px;
  height: 20px;
  display: flex;
  align-items: center;
  justify-content: center;
  background: linear-gradient(#f7fafe, #cfdcf0);
}
.search-btn svg {
  width: 13px;
  height: 13px;
}
.lang-bar {
  width: 103px;
  display: flex;
  align-items: center;
  padding-left: 18px;
}
.lang-bar svg {
  height: 16px;
}
.mic {
  width: 16px;
}
.pad {
  width: 16px;
  margin-left: 5px;
}
.hlp {
  width: 14px;
  margin-left: 6px;
}
.hlp text {
  font: bold 11px "Open Sans", sans-serif;
  text-anchor: middle;
}
.opt {
  width: 9px;
  margin-left: 10px;
}
.tray {
  flex: 1;
  height: 30px;
  display: flex;
  align-items: center;
  gap: 2px;
  margin-left: 8px;
  border-left: 1px solid #0a3f9e;
  background: linear-gradient(#1387df, #19a9f5 12%, #149aec 50%, #1290e6 85%, #0c66bd);
}
.tray svg {
  width: 16px;
  height: 16px;
}
.tray .chevron {
  width: 18px;
  height: 18px;
  margin-left: -10px;
}
.clock {
  margin-left: 4px;
  white-space: nowrap;
}
```
FILE: script.js
```javascript
const columns = [180, 122, 132, 64, 64, 64, 64, 64, 64, 64, 64, 64, 64, 64, 64, 64];
const rowHeights = { 1: 29, 2: 25, 3: 28, 4: 28 };
const values = {
  A1: 'USER NAME', B1: 'First Name', C1: 'Last Name',
  A2: 'Sandeep Kapadane', A3: 'Raju Patil', A4: 'Ramesh Joshi'
};

const corner = '<th class="corner"><svg viewBox="0 0 11 11"><path d="M11 0v11H0z" fill="#b9bdc4"/></svg></th>';
let cols = '<col style="width: 26px">';
let heads = corner;
columns.forEach(function (width, i) {
  const letter = String.fromCharCode(65 + i);
  cols += `<col style="width: ${width}px">`;
  heads += `<th${letter === 'E' ? ' class="picked"' : ''}>${letter}</th>`;
});

let body = '';
for (let r = 1; r <= 37; r++) {
  const headClass = r === 10 ? 'picked' : rowHeights[r] ? 'tall' : '';
  body += `<tr><th class="${headClass}" style="height: ${rowHeights[r] || 20}px">${r}</th>`;
  for (let c = 0; c < columns.length; c++) {
    const id = String.fromCharCode(65 + c) + r;
    const names = [];
    if (r <= 4 && c <= 2) names.push('filled');
    if (r === 1 && c <= 2) names.push('heading');
    if (id === 'E10') names.push('cursor');
    body += `<td class="${names.join(' ')}">${values[id] || ''}</td>`;
  }
  body += '</tr>';
}

document.getElementById('cols').innerHTML = cols;
document.getElementById('colHeads').innerHTML = heads;
document.getElementById('rows').innerHTML = body;
```
